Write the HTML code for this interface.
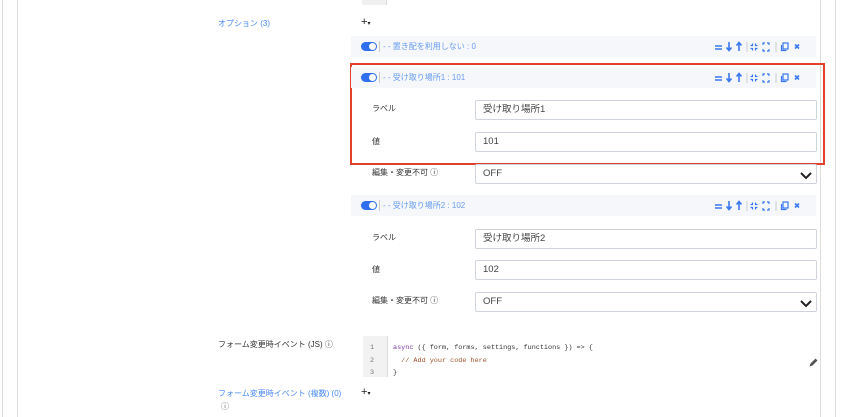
<!DOCTYPE html>
<html><head><meta charset="utf-8"><style>
*{box-sizing:border-box;margin:0;padding:0}
body{width:849px;height:417px;background:#fff;position:relative;overflow:hidden;font-family:"Liberation Sans","Noto Sans CJK JP",sans-serif;font-size:9px;color:#333}
.a{position:absolute;white-space:nowrap}
.vl{position:absolute;top:0;width:1px;height:417px;background:#dcdcdc}
.blue{color:#4a8af4}
.bar{position:absolute;left:351px;width:465px;height:21px;background:#f5f7fa}
.tg{position:absolute;left:10px;top:6px;width:16px;height:9px;border-radius:5px;background:#2f6ff0}
.tg:after{content:"";position:absolute;right:1px;top:1px;width:7px;height:7px;border-radius:50%;background:#fff}
.sep{position:absolute;left:28px;top:5px;width:1px;height:11px;background:#ccc}
.bt{position:absolute;left:32px;top:5px;font-size:8px;line-height:11px;color:#6a9cf0}
.icons{position:absolute;left:362px;top:5px}
.in{position:absolute;left:475px;width:342px;height:20px;border:1px solid #cfd4da;border-radius:2px;font-size:9.5px;line-height:18px;padding:0 7px;color:#444}
.lb{position:absolute;left:372px;font-size:8px;line-height:10px;color:#333}
.chev{position:absolute;right:4px;top:5px;width:12px;height:10px}
.mono{font-family:"Liberation Mono",monospace;font-size:6.8px}
</style></head><body>
<div class="vl" style="left:2px"></div><div class="vl" style="left:17px"></div>
<div class="vl" style="left:820px"></div><div class="vl" style="left:835px"></div>
<div class="a" style="left:362px;top:0;width:25px;height:5px;background:#f0f0f0;border-right:1px solid #ddd"></div>

<div class="a blue" style="left:218px;top:18px;font-size:8px">オプション (3)</div>
<div class="a" style="left:361px;top:16px;font-size:11px;color:#222">+<span style="font-size:6px">▾</span></div>

<svg width="0" height="0" style="position:absolute"><defs>
<g id="ico" fill="none" stroke="#3a78f0" stroke-width="1.6">
<path d="M2 5h7M2 8h7"/>
<path d="M16 1v8M13.5 6.5l2.5 3 2.5-3" /><path d="M26 10V2M23.5 4.5l2.5-3 2.5 3"/>
<path d="M34 1v10" stroke="#ccc" stroke-width="1"/>
<path d="M39.5 2.5v2h-2M42.5 2.5v2h2M39.5 9.5v-2h-2M42.5 9.5v-2h2" stroke-width="1.2"/>
<path d="M50 4V2h2M56 4V2h-2M50 8v2h2M56 8v2h-2" stroke-width="1.2"/>
<path d="M63 1v10" stroke="#ccc" stroke-width="1"/>
<rect x="70" y="2" width="5" height="6" stroke-width="1.2"/><path d="M68.5 4v5.5h5" stroke-width="1.2"/>
<path d="M82 3.5l4 4M86 3.5l-4 4"/>
</g></defs></svg>

<div class="bar" style="top:36px"><div class="tg"></div><div class="sep"></div><div class="bt">- - 置き配を利用しない : 0</div><svg class="icons" width="90" height="12"><use href="#ico"/></svg></div>

<div class="a" style="left:350px;top:63px;width:475px;height:102px;border:2px solid #e2412c"></div>
<div class="bar" style="top:67px"><div class="tg"></div><div class="sep"></div><div class="bt">- - 受け取り場所1 : 101</div><svg class="icons" width="90" height="12"><use href="#ico"/></svg></div>
<div class="lb" style="top:104px">ラベル</div><div class="in" style="top:100px">受け取り場所1</div>
<div class="lb" style="top:137px">値</div><div class="in" style="top:132px">101</div>
<div class="lb" style="top:168px">編集・変更不可 ⓘ</div><div class="in" style="top:164px">OFF<svg class="chev" viewBox="0 0 12 10"><path d="M1 3l5 5 5-5" fill="none" stroke="#222" stroke-width="2"/></svg></div>

<div class="bar" style="top:195px"><div class="tg"></div><div class="sep"></div><div class="bt">- - 受け取り場所2 : 102</div><svg class="icons" width="90" height="12"><use href="#ico"/></svg></div>
<div class="lb" style="top:233px">ラベル</div><div class="in" style="top:229px">受け取り場所2</div>
<div class="lb" style="top:265px">値</div><div class="in" style="top:260px">102</div>
<div class="lb" style="top:296px">編集・変更不可 ⓘ</div><div class="in" style="top:292px">OFF<svg class="chev" viewBox="0 0 12 10"><path d="M1 3l5 5 5-5" fill="none" stroke="#222" stroke-width="2"/></svg></div>

<div class="a" style="left:218px;top:339px;font-size:8px">フォーム変更時イベント (JS) ⓘ</div>
<div class="a" style="left:363px;top:336px;width:25px;height:41px;background:#f2f2f2;border-right:1px solid #ddd"></div>
<div class="a mono" style="left:370px;top:342px;color:#777;line-height:12.5px">1<br>2<br>3</div>
<div class="a mono" style="left:393px;top:342px;line-height:12.5px;color:#333"><span style="color:#7a3e9d">async</span> ({ form, forms, settings, functions }) =&gt; {<br>&nbsp;&nbsp;<span style="color:#a0522d">// Add your code here</span><br>}</div>
<svg class="a" style="left:808px;top:358px" width="10" height="10"><path d="M1.5 8.5l1-3 5-5 2 2-5 5z" fill="#555"/></svg>

<div class="a blue" style="left:218px;top:388px;font-size:8px">フォーム変更時イベント (複数) (0)</div>
<div class="a" style="left:221px;top:401px;font-size:8px;color:#666">ⓘ</div>
<div class="a" style="left:361px;top:386px;font-size:11px;color:#222">+<span style="font-size:6px">▾</span></div>
</body></html>
